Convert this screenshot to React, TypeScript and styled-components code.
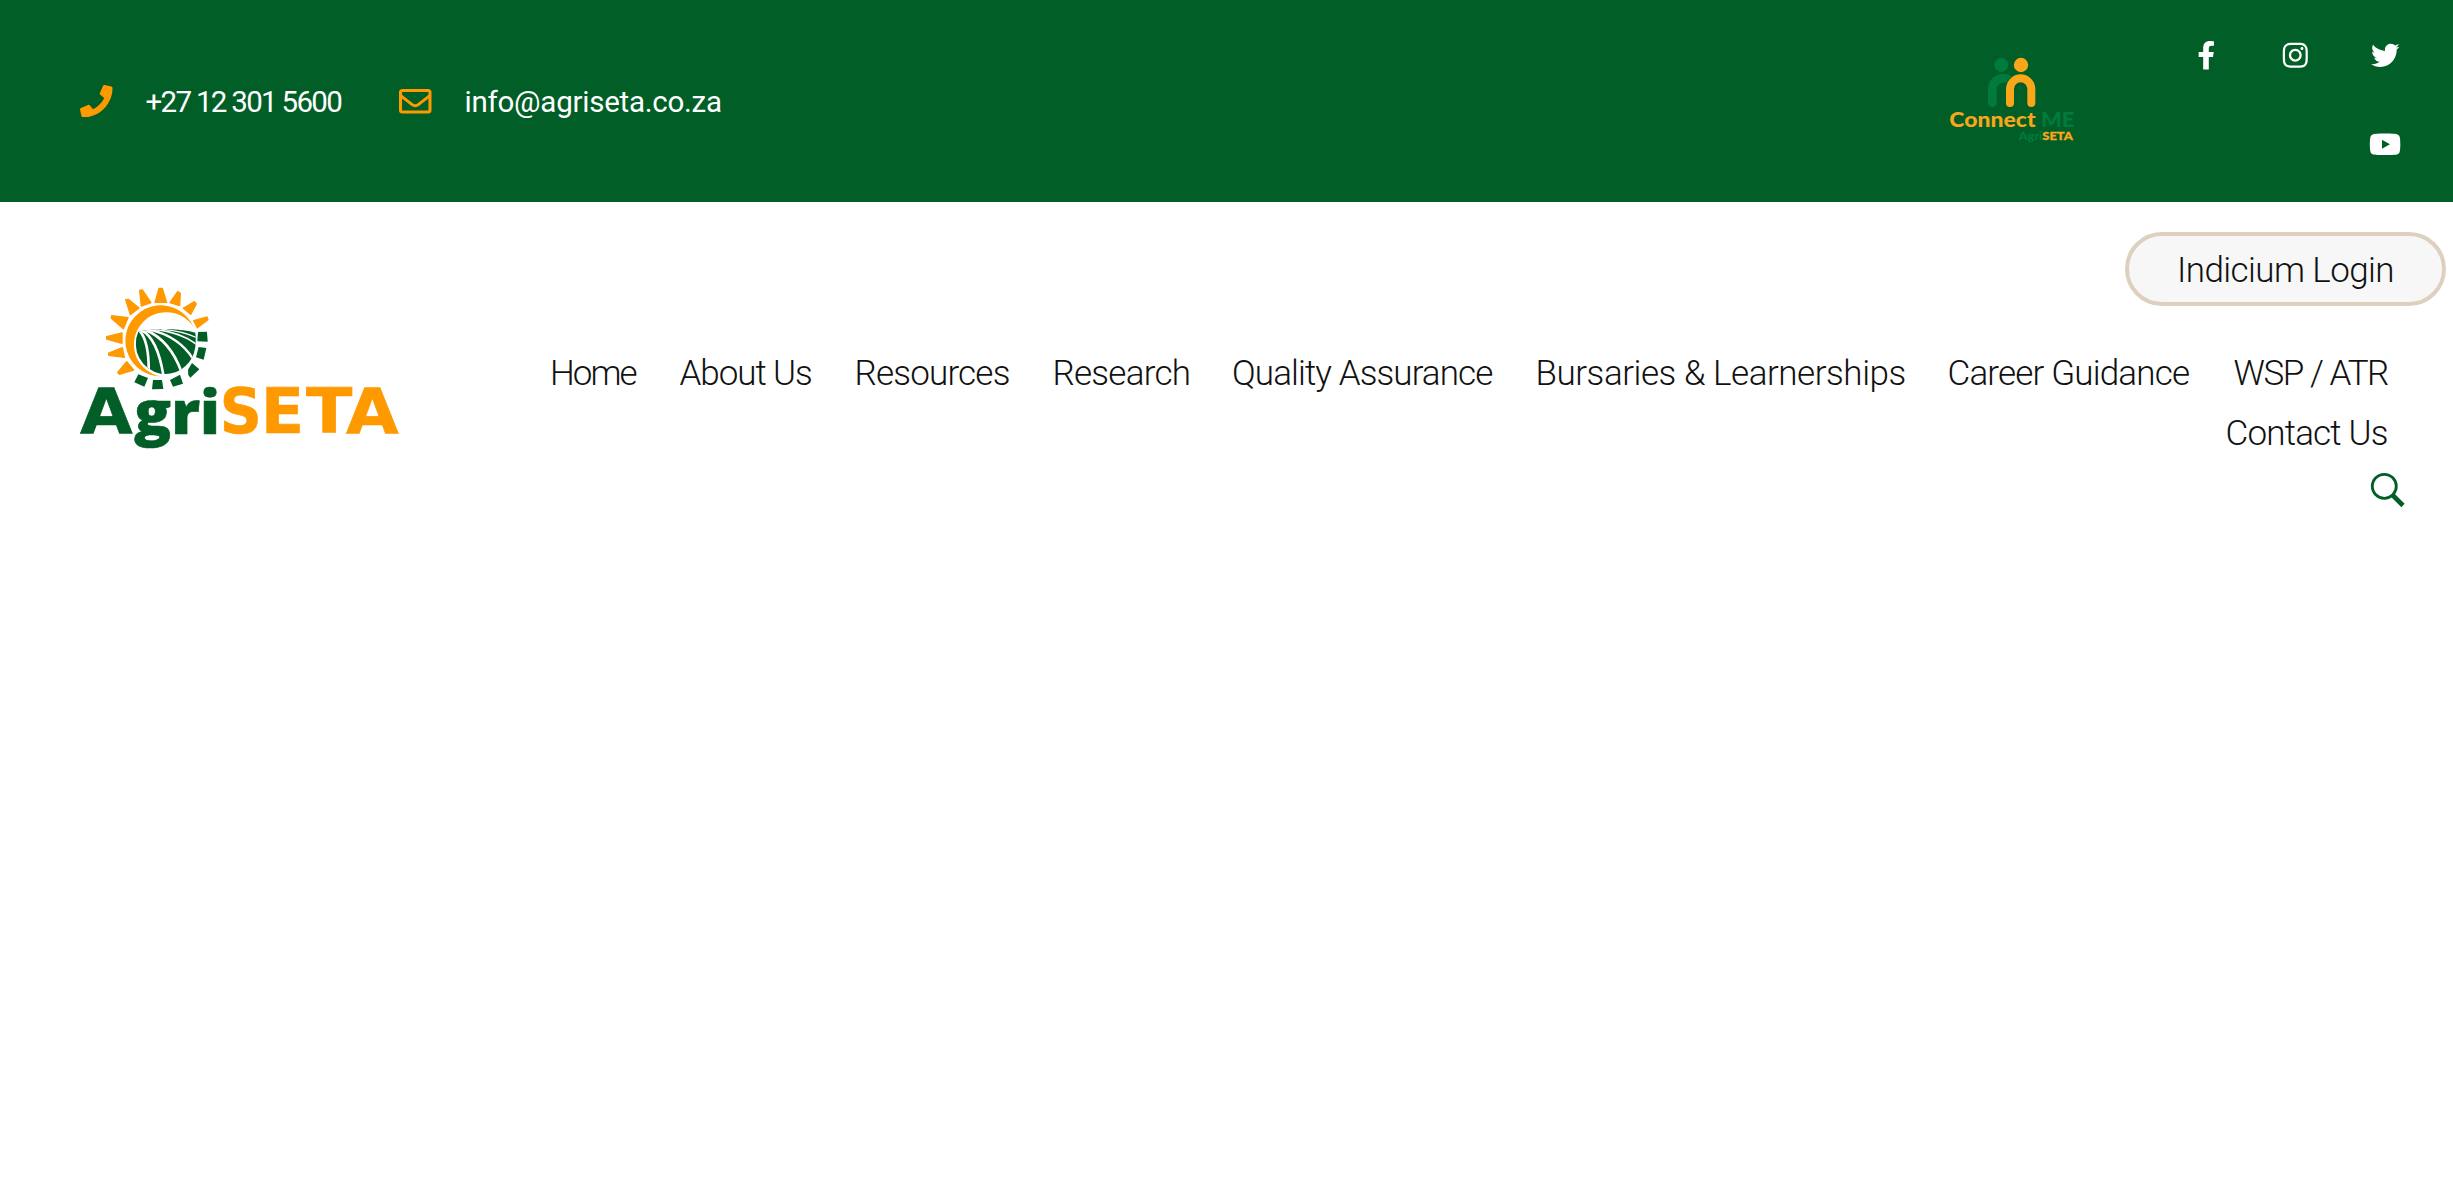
import React from "react";
import styled, { createGlobalStyle } from "styled-components";
import { FaPhone, FaRegEnvelope, FaFacebookF, FaInstagram, FaTwitter, FaYoutube } from "react-icons/fa";

const GREEN = "#005e26";
const ORANGE = "#ff9900";

const GlobalStyle = createGlobalStyle`
  body {
    margin: 0;
    background: #fff;
    font-family: Roboto, "Liberation Sans", sans-serif;
    overflow-x: hidden;
  }
  a { color: inherit; text-decoration: none; }
  svg { display: block; }
`;

const TopBar = styled.div`
  display: flex;
  align-items: flex-start;
  box-sizing: border-box;
  height: 202px;
  padding: 0 23.5px 0 80px;
  background: ${GREEN};
`;

const Contacts = styled.div`
  display: flex;
  align-items: center;
  height: 202px;
  flex: 1;
`;

const Contact = styled.a<{ $width: number }>`
  display: flex;
  align-items: center;
  gap: 33px;
  width: ${p => p.$width}px;
  color: #fff;
  font-size: 29.5px;
  line-height: 44px;
  white-space: nowrap;
  svg { flex: none; width: 32.5px; height: 32.5px; color: ${ORANGE}; }
`;

const ContactText = styled.span<{ $tracking: number; $word?: number }>`
  padding-top: 1px;
  letter-spacing: ${p => p.$tracking}px;
  word-spacing: ${p => p.$word ?? 0}px;
`;

const PartnerLogo = styled.a`
  margin: 40px 71.5px 0 0;
`;

const Socials = styled.div`
  display: flex;
  flex-wrap: wrap;
  justify-content: flex-end;
  width: 268px;
  padding-top: 11px;
`;

const Social = styled.a<{ $wide?: boolean }>`
  display: flex;
  align-items: center;
  justify-content: center;
  width: 89.3px;
  height: 89.2px;
  color: #fff;
  font-size: 28.6px;
  svg { width: ${p => (p.$wide ? "1.125em" : "1em")}; height: 1em; }
`;

const Header = styled.header`
  display: flex;
  justify-content: space-between;
  padding-left: 70px;
`;

const Brand = styled.a`
  padding-top: 73px;
`;

const HeaderRight = styled.div`
  display: flex;
  flex-direction: column;
  align-items: flex-end;
  padding-top: 30px;
`;

const LoginButton = styled.a`
  box-sizing: border-box;
  width: 321px;
  height: 74px;
  margin-right: 7px;
  padding: 2px 0 0 0;
  border: 4px solid #ddd0be;
  border-radius: 37px;
  background: #f7f7f7;
  color: #111;
  font-size: 35px;
  font-weight: 300;
  line-height: 66px;
  letter-spacing: -0.6px;
  text-align: center;
`;

const Nav = styled.nav`
  display: flex;
  flex-wrap: wrap;
  justify-content: flex-end;
  width: 1842px;
  margin: 38px 63px 0 0;
`;

const NavItem = styled.a<{ $width: number; $tracking: number }>`
  width: ${p => p.$width}px;
  color: #111;
  font-size: 35px;
  font-weight: 300;
  line-height: 60px;
  letter-spacing: ${p => p.$tracking}px;
  white-space: nowrap;
`;

const SearchButton = styled.a`
  margin: 8px 47px 0 0;
`;

const NAV = [
  { label: "Home", width: 129.5, tracking: -2 },
  { label: "About Us", width: 175, tracking: -1.05 },
  { label: "Resources", width: 198, tracking: -0.8 },
  { label: "Research", width: 179.5, tracking: -0.75 },
  { label: "Quality Assurance", width: 303.5, tracking: -0.9 },
  { label: "Bursaries & Learnerships", width: 412, tracking: -0.46 },
  { label: "Career Guidance", width: 286, tracking: -0.83 },
  { label: "WSP / ATR", width: 156.5, tracking: -1.45 },
  { label: "Contact Us", width: 164.5, tracking: -0.8 },
];

const RAYS = [
  "267,40 277,40 290,82 255,82",
  "323,50 331,55 329,92 300,83",
  "373,80 379,87 362,118 340,100",
  "411,126 414,134 382,158 371,137",
  "209,46 217,45 243,83 214,93",
  "167,74 175,73 207,99 181,119",
  "124,130 125,122 174,128 160,161",
  "110,192 110,185 156,174 156,205",
  "116,241 116,234 157,218 163,247",
  "148,298 143,292 170,260 191,285",
];

const COGS = [
  "384,171 411,170 413,200 382,199",
  "386,216 409,219 401,254 378,247",
  "366,264 388,283 361,308 355,300 354,284",
  "300,315 330,299 339,326 309,335",
  "249,315 276,315 280,342 246,343",
  "205,298 234,309 223,335 193,322",
];

const FURROWS = [
  { d: "M208 166Q238 200 236 292", w: 8 },
  { d: "M214 165Q262 190 280 300", w: 8 },
  { d: "M225 164Q300 195 334 290", w: 8 },
  { d: "M236 163Q325 183 368 250", w: 7 },
  { d: "M252 163Q335 172 382 210", w: 5 },
  { d: "M275 163Q340 168 384 190", w: 4 },
];

function AgriSetaLogo() {
  return (
    <svg width="340" height="185" viewBox="0 0 1020 555" role="img" aria-label="AgriSETA">
      <g fill={ORANGE} stroke={ORANGE} strokeWidth="4" strokeLinejoin="round">
        {RAYS.map(p => <polygon key={p} points={p} />)}
      </g>
      <path fill={ORANGE} d="M272 304A106.5 106.5 0 1 1 371 157A97 97 0 1 0 272 304Z" />
      <g fill={GREEN}>{COGS.map(p => <polygon key={p} points={p} />)}</g>
      <clipPath id="field">
        <path d="M205 170Q240 162 290 162Q345 164 376 173Q380 205 372 234A91 91 0 0 1 272 296A91 91 0 0 1 205 170Z" />
      </clipPath>
      <g clipPath="url(#field)">
        <rect x="180" y="150" width="210" height="160" fill={GREEN} />
        {FURROWS.map(f => <path key={f.d} d={f.d} fill="none" stroke="#fff" strokeWidth={f.w} />)}
      </g>
      <g fontFamily='"DejaVu Sans", sans-serif' fontWeight="700" fontSize="189">
        <text x="30" y="475" fill={GREEN} stroke={GREEN} strokeWidth="2" textLength="158" lengthAdjust="spacingAndGlyphs">A</text>
        <g fill={ORANGE} stroke={ORANGE} strokeWidth="2">
          <text x="449" y="475" textLength="126" lengthAdjust="spacingAndGlyphs">S</text>
          <text x="573" y="475" textLength="129" lengthAdjust="spacingAndGlyphs">E</text>
          <text x="708" y="475" textLength="139" lengthAdjust="spacingAndGlyphs">T</text>
          <text x="828" y="475" textLength="158" lengthAdjust="spacingAndGlyphs">A</text>
        </g>
      </g>
      <text x="192" y="477" fill={GREEN} stroke={GREEN} strokeWidth="2" fontFamily='"Open Sans", sans-serif' fontWeight="800" fontSize="181" textLength="258" lengthAdjust="spacingAndGlyphs">gri</text>
    </svg>
  );
}

function ConnectLogo() {
  const gold = "#faa61a";
  const leaf = "#007a3d";
  return (
    <svg width="160" height="120" viewBox="0 0 480 360" role="img" aria-label="Connect ME">
      <circle cx="214" cy="75" r="21" fill={leaf} />
      <circle cx="273" cy="75" r="21.5" fill={gold} />
      <g fill="none" strokeLinecap="round">
        <path d="M187 188V148A33 33 0 0 1 238 120" stroke={leaf} strokeWidth="26" />
        <path d="M240 188V148A32 32 0 0 1 304 148V188" stroke={GREEN} strokeWidth="30" />
        <path d="M240 189V147A32 32 0 0 1 304 147V189" stroke={gold} strokeWidth="24" />
      </g>
      <g fontFamily="Lato, sans-serif" fontWeight="900">
        <text x="58" y="262" fontSize="62" fill={gold} textLength="259" lengthAdjust="spacingAndGlyphs">Connect</text>
        <text x="333" y="262" fontSize="62" fill={leaf} textLength="100" lengthAdjust="spacingAndGlyphs">ME</text>
        <text x="266" y="300" fontSize="33" fill={leaf} textLength="71" lengthAdjust="spacingAndGlyphs">Agri</text>
        <text x="337" y="300" fontSize="34" fill={gold} stroke={gold} strokeWidth="1" textLength="91" lengthAdjust="spacingAndGlyphs">SETA</text>
      </g>
    </svg>
  );
}

export default function App() {
  return (
    <>
      <GlobalStyle />
      <TopBar>
        <Contacts>
          <Contact $width={319}>
            <FaPhone />
            <ContactText $tracking={-1.7} $word={0}>+27 12 301 5600</ContactText>
          </Contact>
          <Contact $width={325}>
            <FaRegEnvelope />
            <ContactText $tracking={-0.24}>info@agriseta.co.za</ContactText>
          </Contact>
        </Contacts>
        <PartnerLogo><ConnectLogo /></PartnerLogo>
        <Socials>
          <Social><FaFacebookF /></Social>
          <Social><FaInstagram /></Social>
          <Social><FaTwitter /></Social>
          <Social $wide><FaYoutube /></Social>
        </Socials>
      </TopBar>
      <Header>
        <Brand><AgriSetaLogo /></Brand>
        <HeaderRight>
          <LoginButton>Indicium Login</LoginButton>
          <Nav>
            {NAV.map(n => (
              <NavItem key={n.label} $width={n.width} $tracking={n.tracking}>{n.label}</NavItem>
            ))}
          </Nav>
          <SearchButton>
            <svg width="36" height="36" viewBox="0 0 36 36" fill="none" stroke={GREEN}>
              <circle cx="14.3" cy="14.3" r="12" strokeWidth="2.8" />
              <path d="M22.5 23L33 33.5" strokeWidth="4.6" />
            </svg>
          </SearchButton>
        </HeaderRight>
      </Header>
    </>
  );
}
